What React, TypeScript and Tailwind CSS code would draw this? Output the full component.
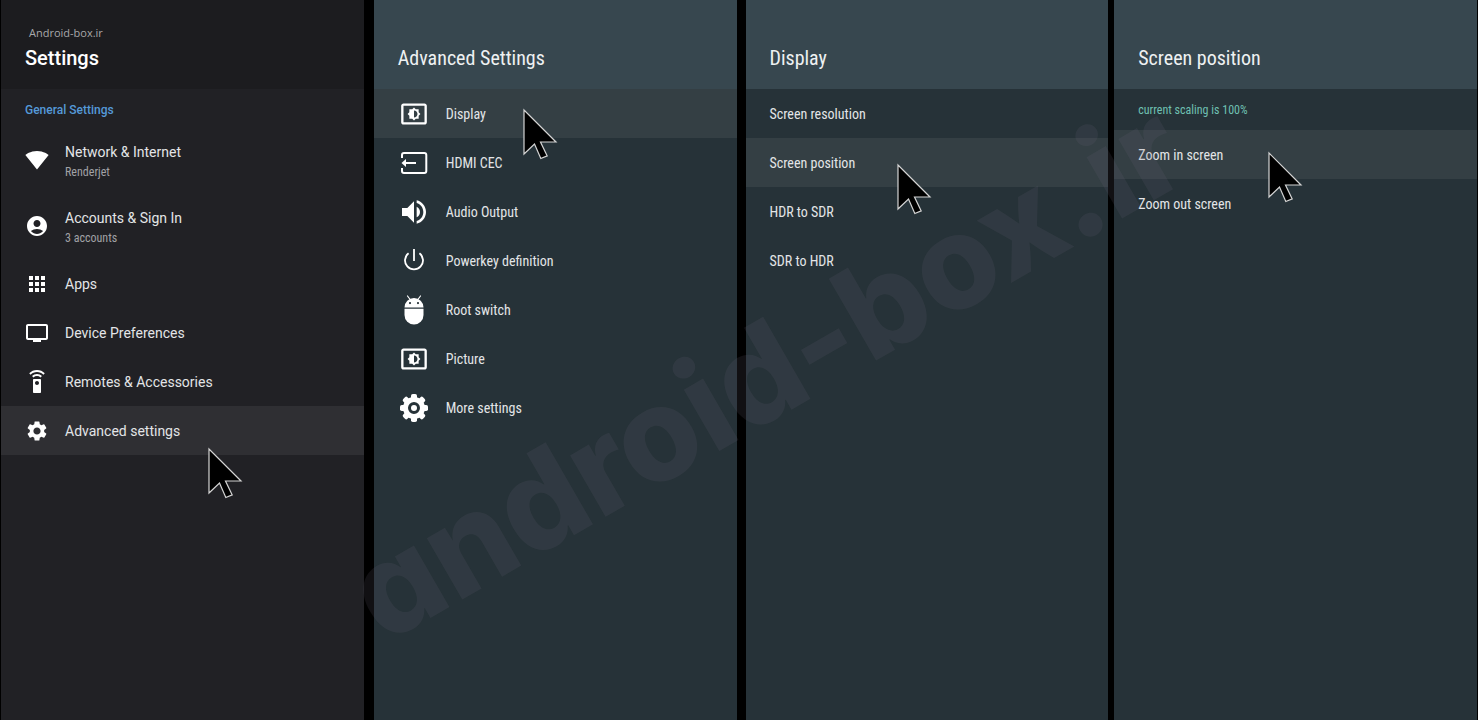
import type { ReactNode } from "react";
import clsx from "clsx";
import {
  MdAccountCircle,
  MdApps,
  MdSettings,
  MdSettingsBrightness,
  MdSettingsRemote,
  MdSignalWifi4Bar,
  MdTv,
  MdVolumeUp,
} from "react-icons/md";

type Item = {
  label: string;
  note?: string;
  icon?: ReactNode;
  active?: boolean;
  cursor?: string;
};

function HdmiIcon() {
  return (
    <svg className="h-7 w-7" viewBox="0 0 28 28" fill="none" stroke="currentColor" strokeWidth="2">
      <path d="M2 9V6a2 2 0 0 1 2-2h20.300a2 2 0 0 1 2 2v16a2 2 0 0 1-2 2H4a2 2 0 0 1-2-2v-3" />
      <path d="M4 14h12" />
      <path d="M6 10v8l-4.500-4z" fill="currentColor" stroke="none" />
    </svg>
  );
}

function PowerIcon() {
  return (
    <svg className="h-7 w-7" viewBox="0 0 28 28" fill="none" stroke="currentColor" strokeWidth="1.8">
      <path d="M14 2v12M8.6 6.2a9 9 0 1 0 10.8 0" />
    </svg>
  );
}

function AndroidIcon() {
  return (
    <svg className="h-8 w-7" viewBox="0 0 28 32" fill="currentColor">
      <path d="M7.5 2l3 4M20.5 2l-3 4" stroke="currentColor" strokeWidth="1.2" strokeLinecap="round" />
      <path
        fillRule="evenodd"
        d="M4.500 13.500a9.500 9.500 0 0 1 19 0zM10 8a1.100 1.100 0 1 0 0 2.200 1.100 1.100 0 0 0 0-2.200zM18 8a1.100 1.100 0 1 0 0 2.200 1.100 1.100 0 0 0 0-2.200z"
      />
      <path d="M4.500 14.800h19v6.200a9.500 9.500 0 0 1-19 0z" />
    </svg>
  );
}

function GearIcon() {
  const teeth = [0, 45, 90, 135, 180, 225, 270, 315];
  return (
    <svg className="h-8 w-8" viewBox="0 0 32 32">
      <g fill="currentColor">
        {teeth.map((angle) => (
          <rect key={angle} x="13" y="2" width="6" height="7" rx="1.8" transform={`rotate(${angle} 16 16)`} />
        ))}
      </g>
      <circle cx="16" cy="16" r="8.5" fill="none" stroke="currentColor" strokeWidth="5" />
      <circle cx="16" cy="16" r="3" fill="currentColor" />
    </svg>
  );
}

function Cursor({ className }: { className: string }) {
  return (
    <svg
      className={clsx("pointer-events-none absolute z-20 h-[52px] w-9", className)}
      viewBox="0 0 36 52"
      aria-hidden="true"
    >
      <path
        d="M2 2v44l10.5-10 6.3 14.5 6.4-2.6L18.5 34H34z"
        fill="#000"
        stroke="#d4d4d4"
        strokeWidth="1.2"
      />
    </svg>
  );
}

const general: Item[] = [
  { label: "Network & Internet", note: "Renderjet", icon: <MdSignalWifi4Bar className="h-6 w-6" /> },
  { label: "Accounts & Sign In", note: "3 accounts", icon: <MdAccountCircle className="h-6 w-6" /> },
  { label: "Apps", icon: <MdApps className="h-6 w-6" /> },
  { label: "Device Preferences", icon: <MdTv className="h-6 w-6" /> },
  { label: "Remotes & Accessories", icon: <MdSettingsRemote className="h-6 w-6" /> },
  {
    label: "Advanced settings",
    icon: <MdSettings className="h-6 w-6" />,
    active: true,
    cursor: "left-[206px] top-[41px]",
  },
];

const advanced: Item[] = [
  {
    label: "Display",
    icon: <MdSettingsBrightness className="h-7 w-7" />,
    active: true,
    cursor: "left-[148px] top-[19px]",
  },
  { label: "HDMI CEC", icon: <HdmiIcon /> },
  { label: "Audio Output", icon: <MdVolumeUp className="h-8 w-8" /> },
  { label: "Powerkey definition", icon: <PowerIcon /> },
  { label: "Root switch", icon: <AndroidIcon /> },
  { label: "Picture", icon: <MdSettingsBrightness className="h-7 w-7" /> },
  { label: "More settings", icon: <GearIcon /> },
];

const display: Item[] = [
  { label: "Screen resolution" },
  { label: "Screen position", active: true, cursor: "left-[150px] top-[25px]" },
  { label: "HDR to SDR" },
  { label: "SDR to HDR" },
];

const position: Item[] = [
  { label: "Zoom in screen", active: true, cursor: "left-[153px] top-[21px]" },
  { label: "Zoom out screen" },
];

function Row({ item, dark }: { item: Item; dark?: boolean }) {
  return (
    <li className="relative">
      <button
        type="button"
        className={clsx(
          "flex w-full items-center gap-4 px-6 text-left",
          item.note ? "h-[66px]" : "h-[49px]",
          item.active && (dark ? "bg-[#2f2f33]" : "bg-[#343f44]"),
        )}
      >
        {item.icon && (
          <span className={clsx("flex shrink-0 justify-center text-white", dark ? "w-6" : "w-8")}>{item.icon}</span>
        )}
        <span className={clsx("flex flex-col", item.note && "pt-1")}>
          <span className="text-[14px] leading-5 text-[#e3e5e7]">{item.label}</span>
          {item.note && (
            <span className="font-['Roboto_Condensed',Roboto,sans-serif] text-[12px] leading-5 text-[#a2a2a6]">
              {item.note}
            </span>
          )}
        </span>
      </button>
      {item.cursor && <Cursor className={item.cursor} />}
    </li>
  );
}

function Panel({ title, items, children }: { title: string; items: Item[]; children?: ReactNode }) {
  return (
    <section className="min-w-0 flex-1 bg-[#263238] font-['Roboto_Condensed',Roboto,sans-serif]">
      <header className="flex h-[89px] items-end bg-[#37474f] px-6 pb-[15px]">
        <h2 className="text-[20px] leading-8 text-[#eef1f2]">{title}</h2>
      </header>
      {children}
      <ul>
        {items.map((item) => (
          <Row key={item.label} item={item} />
        ))}
      </ul>
    </section>
  );
}

export default function App() {
  return (
    <main className="relative flex min-h-screen overflow-hidden bg-black px-px">
      <section className="min-w-0 flex-1 bg-[#212125] font-[Roboto,sans-serif]">
        <header className="flex h-[89px] flex-col justify-end bg-[#1c1c1f] px-6 pb-[15px]">
          <p className="pb-px pl-1 font-['Open_Sans',sans-serif] text-[11px] leading-4 text-[#a8a8aa]">
            Android-box.ir
          </p>
          <h1 className="text-[20px] font-medium leading-8 text-white">Settings</h1>
        </header>
        <h2 className="px-6 pb-1.5 pt-2.5 text-[12px] font-medium leading-[22px] text-[#5599d8]">General Settings</h2>
        <ul>
          {general.map((item) => (
            <Row key={item.label} item={item} dark />
          ))}
        </ul>
      </section>
      <div className="w-[10px]" />
      <Panel title="Advanced Settings" items={advanced} />
      <div className="w-[9px]" />
      <Panel title="Display" items={display} />
      <div className="w-[6px]" />
      <Panel title="Screen position" items={position}>
        <p className="px-6 pb-2 pt-[9px] text-[12px] leading-6 text-[#6fc0b2]">current scaling is 100%</p>
      </Panel>

      {/* site watermark across the panels */}
      <p className="pointer-events-none absolute left-[766px] top-[370px] z-10 -translate-x-1/2 -translate-y-1/2 -rotate-30 whitespace-nowrap font-[Inter,sans-serif] text-[130px] font-extrabold leading-none text-[#6c6474]/16 [font-feature-settings:'cv11']">
        android-box.ir
      </p>
    </main>
  );
}
